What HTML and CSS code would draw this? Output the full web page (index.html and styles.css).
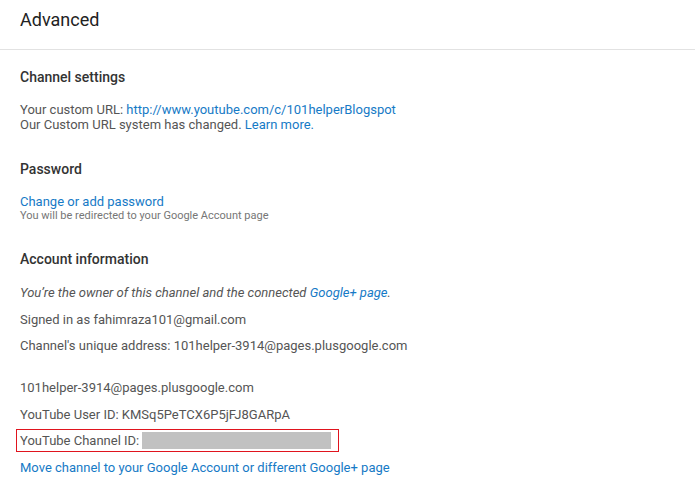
FILE: index.html
```html
<!DOCTYPE html>
<html lang="en">
<head>
<meta charset="utf-8">
<title>Advanced</title>
<link rel="stylesheet" href="styles.css">
</head>
<body>
<header class="page-header">
  <h1 class="page-title">Advanced</h1>
</header>
<main class="content">
  <section class="section section-channel">
    <h2 class="section-title">Channel settings</h2>
    <div class="text-block">
      <div class="line">Your custom URL: <a class="link" href="#">http://www.youtube.com/c/101helperBlogspot</a></div>
      <div class="line">Our Custom URL system has changed. <a class="link" href="#">Learn more.</a></div>
    </div>
  </section>
  <section class="section section-password">
    <h2 class="section-title">Password</h2>
    <div class="text-block">
      <div class="line"><a class="link" href="#">Change or add password</a></div>
      <div class="small">You will be redirected to your Google Account page</div>
    </div>
  </section>
  <section class="section section-account">
    <h2 class="section-title">Account information</h2>
    <div class="rows">
      <p class="row italic">You’re the owner of this channel and the connected <a class="link" href="#">Google+ page</a>.</p>
      <p class="row">Signed in as fahimraza101@gmail.com</p>
      <p class="row">Channel's unique address: 101helper-3914@pages.plusgoogle.com</p>
      <p class="row row-spaced">101helper-3914@pages.plusgoogle.com</p>
      <p class="row">YouTube User ID: KMSq5PeTCX6P5jFJ8GARpA</p>
      <div class="row-highlight">
        <span class="highlight-box"><span>YouTube Channel ID:</span><span class="redacted"></span></span>
      </div>
      <p class="row row-after"><a class="link" href="#">Move channel to your Google Account or different Google+ page</a></p>
    </div>
  </section>
</main>
</body>
</html>
```

FILE: styles.css
```css
* { box-sizing: border-box; }

html, body {
  margin: 0;
  padding: 0;
  background: #ffffff;
}

body {
  font-family: Roboto, "Liberation Sans", Arial, sans-serif;
  font-size: 13px;
  color: #555555;
}

.page-header {
  height: 50px;
  padding: 8px 20px 0;
  border-bottom: 1px solid #e2e2e2;
}

.page-title {
  margin: 0;
  font-size: 18px;
  line-height: 24px;
  font-weight: 400;
  color: #222222;
}

.content {
  padding: 19px 20px 0;
}

.section-title {
  margin: 0;
  font-size: 14px;
  line-height: 16px;
  font-weight: 500;
  color: #333333;
}

.section-password { margin-top: 29px; }
.section-account { margin-top: 28px; }

.text-block {
  margin-top: 17px;
}

.line {
  line-height: 15px;
}

.small {
  font-size: 11px;
  line-height: 14px;
  color: #767676;
}

.link {
  color: #167ac6;
  text-decoration: none;
}

.rows {
  margin-top: 18px;
}

.row {
  margin: 0;
  line-height: 15px;
}

.row + .row {
  margin-top: 11.7px;
}

.row.row-spaced {
  margin-top: 27px;
}

.italic {
  font-style: italic;
}

.row-highlight {
  margin-top: 6.5px;
  display: flex;
}

.highlight-box {
  display: flex;
  align-items: center;
  margin-left: -4px;
  padding: 2px 7px 2px 3px;
  border: 1px solid #e0141e;
  line-height: 15px;
}

.redacted {
  display: block;
  width: 189px;
  height: 17px;
  margin-left: 3px;
  background: #c1c1c1;
}

.row.row-after {
  margin-top: 8.5px;
}
```
